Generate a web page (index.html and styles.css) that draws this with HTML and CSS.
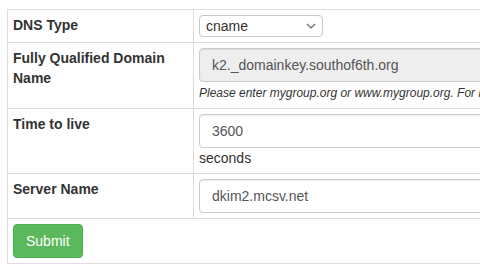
FILE: index.html
```html
<!DOCTYPE html>
<html lang="en">
<head>
    <meta charset="UTF-8">
    <meta name="viewport" content="width=device-width, initial-scale=1.0">
    <title>Add DNS Record</title>
    <link rel="stylesheet" href="styles.css">
</head>
<body>

    <form id="dnsForm">
        <table class="record-table">
            <tr>
                <th>DNS Type</th>
                <td>
                    <div class="select-wrap">
                        <select id="type" name="type">
                            <option>a</option>
                            <option selected>cname</option>
                            <option>mx</option>
                            <option>txt</option>
                        </select>
                        <svg class="chevron" width="10" height="6" viewBox="0 0 10 6"><path d="M1 1l4 4 4-4" fill="none" stroke="#666" stroke-width="1.2"/></svg>
                    </div>
                </td>
            </tr>
            <tr>
                <th>Fully Qualified Domain Name</th>
                <td>
                    <input type="text" class="field" name="fqdn" value="k2._domainkey.southof6th.org" readonly>
                    <i class="help">Please enter mygroup.org or www.mygroup.org. For mail hosts use the full name.</i>
                </td>
            </tr>
            <tr>
                <th>Time to live</th>
                <td>
                    <input type="text" class="field" name="ttl" value="3600">
                    seconds
                </td>
            </tr>
            <tr>
                <th>Server Name</th>
                <td>
                    <input type="text" class="field" name="server" value="dkim2.mcsv.net">
                </td>
            </tr>
            <tr>
                <td colspan="2">
                    <button type="submit" class="btn-submit">Submit</button>
                </td>
            </tr>
        </table>
    </form>

</body>
</html>
```

FILE: styles.css
```css
* {
    box-sizing: border-box;
}

html, body {
    overflow: hidden;
}

body {
    margin: 0;
    padding: 9px 0 0 7px;
    font-family: "Liberation Sans", Arial, sans-serif;
    font-size: 14px;
    line-height: 20px;
    color: #333;
    background-color: #fff;
}

.record-table {
    border-collapse: collapse;
    width: 760px;
}

.record-table th,
.record-table td {
    border: 1px solid #ddd;
    padding: 5px;
    text-align: left;
    vertical-align: top;
}

.record-table th {
    width: 186px;
    font-weight: bold;
}

.select-wrap {
    position: relative;
    width: 124px;
    height: 22px;
}

.select-wrap select {
    appearance: none;
    -webkit-appearance: none;
    width: 100%;
    height: 22px;
    padding: 0 0 0 6px;
    border: 1px solid #c9c9c9;
    border-radius: 4px;
    background-color: #fff;
    font-family: "Liberation Sans", Arial, sans-serif;
    font-size: 14px;
    color: #333;
}

.chevron {
    position: absolute;
    right: 7px;
    top: 8px;
}

.field {
    display: block;
    width: 100%;
    height: 34px;
    padding: 6px 12px;
    border: 1px solid #ccc;
    border-radius: 4px;
    font-family: "Liberation Sans", Arial, sans-serif;
    font-size: 14px;
    color: #555;
    box-shadow: inset 0 1px 1px rgba(0, 0, 0, 0.075);
}

.field[readonly] {
    background-color: #eee;
}

.help {
    font-size: 12px;
    white-space: nowrap;
}

.btn-submit {
    height: 34px;
    padding: 6px 12px;
    border: 1px solid #4cae4c;
    border-radius: 4px;
    background-color: #5cb85c;
    color: #fff;
    font-family: "Liberation Sans", Arial, sans-serif;
    font-size: 14px;
    cursor: pointer;
}

.btn-submit:hover {
    background-color: #449d44;
}
```
